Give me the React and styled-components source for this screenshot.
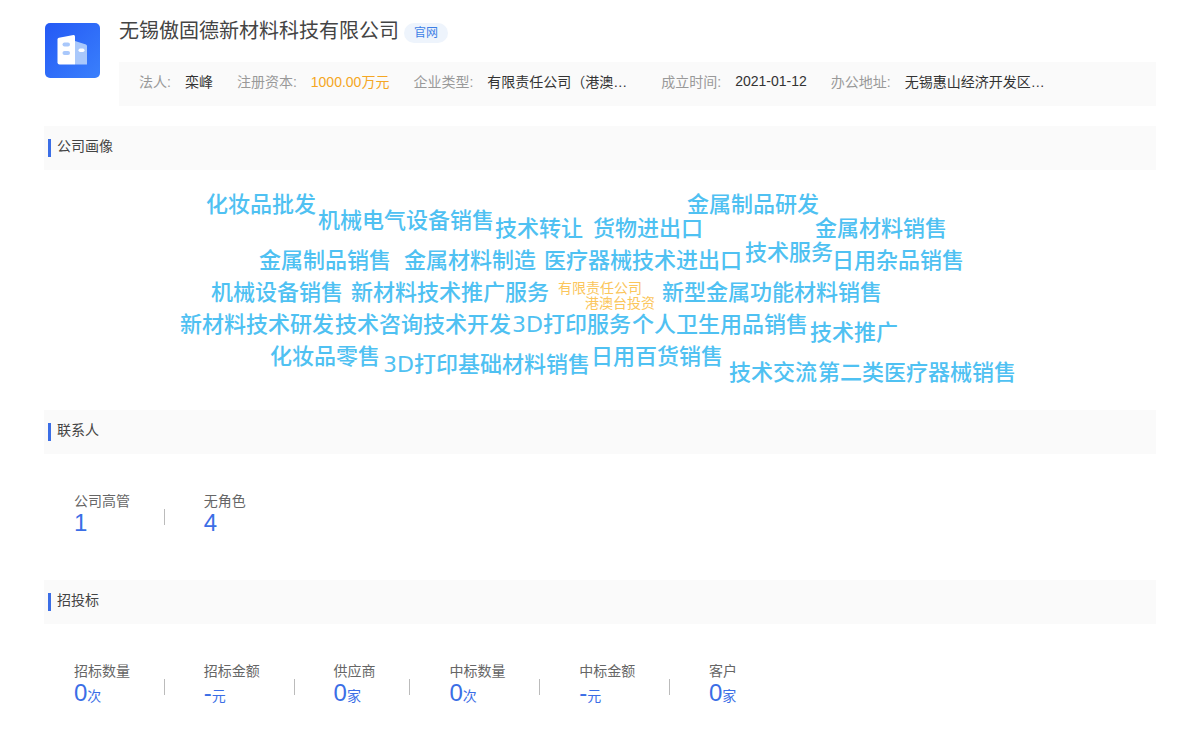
import { createGlobalStyle, styled } from "styled-components";

const GlobalStyle = createGlobalStyle`
  body {
    margin: 0;
    background: #fff;
    font-family: "Liberation Sans", "Noto Sans CJK SC", sans-serif;
    color: #333;
  }
`;

const infoItems = [
  { label: "法人", value: "栾峰" },
  { label: "注册资本", value: "1000.00万元", highlight: true },
  { label: "企业类型", value: "有限责任公司（港澳…", wide: true },
  { label: "成立时间", value: "2021-01-12" },
  { label: "办公地址", value: "无锡惠山经济开发区…", wide: true },
];

const words = [
  { text: "化妆品批发", x: 206, y: 35 },
  { text: "机械电气设备销售", x: 318, y: 51 },
  { text: "技术转让", x: 495, y: 59 },
  { text: "货物进出口", x: 593, y: 59 },
  { text: "金属制品研发", x: 687, y: 35 },
  { text: "金属材料销售", x: 815, y: 59 },
  { text: "金属制品销售", x: 259, y: 91 },
  { text: "金属材料制造", x: 404, y: 91 },
  { text: "医疗器械技术进出口", x: 544, y: 91 },
  { text: "技术服务", x: 745, y: 83 },
  { text: "日用杂品销售", x: 832, y: 91 },
  { text: "机械设备销售", x: 211, y: 123 },
  { text: "新材料技术推广服务", x: 351, y: 123 },
  { text: "有限责任公司", x: 558, y: 118, small: true },
  { text: "港澳台投资", x: 585, y: 133, small: true },
  { text: "新型金属功能材料销售", x: 662, y: 123 },
  { text: "新材料技术研发", x: 180, y: 155 },
  { text: "技术咨询", x: 335, y: 155 },
  { text: "技术开发", x: 423, y: 155 },
  { text: "3D打印服务", x: 512, y: 155 },
  { text: "个人卫生用品销售", x: 632, y: 155 },
  { text: "技术推广", x: 810, y: 163 },
  { text: "化妆品零售", x: 270, y: 187 },
  { text: "3D打印基础材料销售", x: 383, y: 195 },
  { text: "日用百货销售", x: 591, y: 187 },
  { text: "技术交流", x: 729, y: 203 },
  { text: "第二类医疗器械销售", x: 818, y: 203 },
];

const contacts = [
  { label: "公司高管", value: "1" },
  { label: "无角色", value: "4" },
];

const bids = [
  { label: "招标数量", value: "0", unit: "次" },
  { label: "招标金额", value: "-", unit: "元" },
  { label: "供应商", value: "0", unit: "家" },
  { label: "中标数量", value: "0", unit: "次" },
  { label: "中标金额", value: "-", unit: "元" },
  { label: "客户", value: "0", unit: "家" },
];

const Logo = () => (
  <LogoBox>
    <svg width="55" height="55" viewBox="0 0 55 55">
      <defs>
        <linearGradient id="logoBg" x1="0" y1="0" x2="1" y2="1">
          <stop offset="0" stopColor="#2459f5" />
          <stop offset="1" stopColor="#3a80fc" />
        </linearGradient>
      </defs>
      <rect width="55" height="55" rx="5" fill="url(#logoBg)" />
      <path d="M30 18 L41 21.5 Q42 22 42 23 V41.5 H30 Z" fill="#a9c8fb" />
      <path d="M12.5 16.5 Q12.5 15 14 14.7 L28.5 12 Q30 11.8 30 13.5 V41.5 H14.5 Q12.5 41.5 12.5 39.5 Z" fill="#fff" />
      <rect x="17.5" y="19.5" width="7.5" height="4" rx="2" fill="#a9c8fb" />
      <rect x="17.5" y="28" width="7.5" height="4" rx="2" fill="#a9c8fb" />
      <rect x="33.5" y="25.5" width="6" height="3.5" rx="1.7" fill="#fff" />
    </svg>
  </LogoBox>
);

const SectionTitle = ({ children }) => (
  <SectionBar>
    <Accent />
    <SectionName>{children}</SectionName>
  </SectionBar>
);

const Stats = ({ items }) => (
  <StatRow>
    {items.map((item) => (
      <Stat key={item.label}>
        <StatLabel>{item.label}</StatLabel>
        <StatValue>
          {item.value}
          {item.unit && <StatUnit>{item.unit}</StatUnit>}
        </StatValue>
      </Stat>
    ))}
  </StatRow>
);

export default function App() {
  return (
    <>
      <GlobalStyle />
      <Page>
        <Header>
          <Logo />
          <HeaderMain>
            <TitleRow>
              <CompanyName>无锡傲固德新材料科技有限公司</CompanyName>
              <Badge>官网</Badge>
            </TitleRow>
            <InfoBar>
              {infoItems.map((item) => (
                <InfoItem key={item.label}>
                  <InfoLabel>{item.label}:</InfoLabel>
                  <InfoValue $highlight={item.highlight} $wide={item.wide}>
                    {item.value}
                  </InfoValue>
                </InfoItem>
              ))}
            </InfoBar>
          </HeaderMain>
        </Header>

        <SectionTitle>公司画像</SectionTitle>
        <Cloud>
          {words.map((word) => (
            <Word key={word.text} $x={word.x} $y={word.y} $small={word.small}>
              {word.text}
            </Word>
          ))}
        </Cloud>

        <SectionTitle>联系人</SectionTitle>
        <Stats items={contacts} />

        <SectionTitle>招投标</SectionTitle>
        <Stats items={bids} />
      </Page>
    </>
  );
}

const Page = styled.div`
  padding: 0 44px;
  height: 752px;
  box-sizing: border-box;
  overflow: hidden;
`;

const Header = styled.div`
  display: flex;
  gap: 19px;
  padding: 16px 0 20px;
`;

const LogoBox = styled.div`
  width: 55px;
  height: 55px;
  margin: 7px 0 0 1px;
  flex: none;
  svg {
    display: block;
  }
`;

const HeaderMain = styled.div`
  flex: 1;
  min-width: 0;
`;

const TitleRow = styled.div`
  display: flex;
  align-items: center;
  height: 30px;
  margin-bottom: 16px;
`;

const CompanyName = styled.div`
  font-size: 20px;
  color: #444;
  line-height: 30px;
`;

const Badge = styled.span`
  margin: 4px 0 0 5px;
  width: 44px;
  height: 20px;
  border-radius: 10px;
  background: #eef4fc;
  color: #3d7fe6;
  font-size: 12px;
  line-height: 20px;
  text-align: center;
`;

const InfoBar = styled.div`
  display: flex;
  align-items: center;
  height: 44px;
  box-sizing: border-box;
  padding: 0 0 6px 20px;
  background: #fafafa;
  font-size: 14px;
`;

const InfoItem = styled.div`
  display: flex;
  align-items: center;
  margin-right: 24px;
`;

const InfoLabel = styled.span`
  color: #999;
  margin-right: 14px;
  white-space: nowrap;
`;

const InfoValue = styled.span`
  color: ${(p) => (p.$highlight ? "#f5a623" : "#333")};
  white-space: nowrap;
  ${(p) => p.$wide && "width: 150px;"}
`;

const SectionBar = styled.div`
  display: flex;
  align-items: center;
  height: 44px;
  background: #fafafa;
  padding-left: 4px;
`;

const Accent = styled.span`
  width: 3px;
  height: 18px;
  background: #3b6ee6;
  margin-right: 6px;
`;

const SectionName = styled.span`
  font-size: 14px;
  color: #444;
  position: relative;
  top: -3px;
`;

const Cloud = styled.div`
  position: relative;
  height: 240px;
  margin: 0 -44px;
`;

const Word = styled.span`
  position: absolute;
  left: ${(p) => p.$x}px;
  top: ${(p) => p.$y}px;
  transform: translateY(-50%);
  font-size: ${(p) => (p.$small ? 14 : 22)}px;
  font-weight: ${(p) => (p.$small ? 400 : 500)};
  color: ${(p) => (p.$small ? "#fbc65c" : "#4fc1f2")};
  font-family: "DejaVu Sans", "Noto Sans CJK SC", sans-serif;
  line-height: 1;
  white-space: nowrap;
`;

const StatRow = styled.div`
  display: flex;
  height: 126px;
  padding: 38px 0 0 30px;
  box-sizing: border-box;
`;

const Stat = styled.div`
  position: relative;
  padding-right: 34.8px;
  margin-right: 39px;
  &:not(:last-child)::after {
    content: "";
    position: absolute;
    right: 0;
    top: 17px;
    width: 1px;
    height: 16px;
    background: #bbb;
  }
`;

const StatLabel = styled.div`
  font-size: 14px;
  line-height: 18px;
  color: #666;
  white-space: nowrap;
`;

const StatValue = styled.div`
  font-size: 24px;
  line-height: 26px;
  color: #3b6ee6;
  white-space: nowrap;
`;

const StatUnit = styled.span`
  font-size: 14px;
`;
